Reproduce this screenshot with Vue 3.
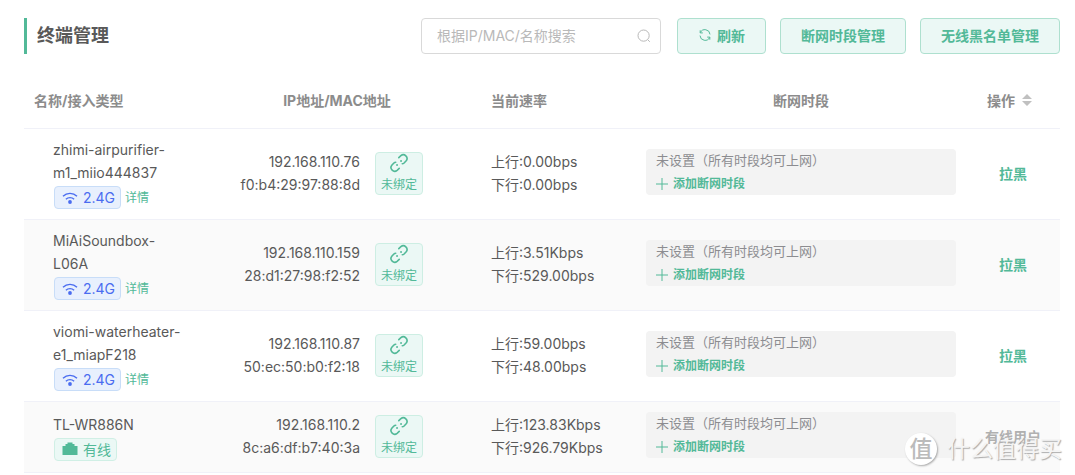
<script setup>
import { ref } from 'vue'

const keyword = ref('')
const clients = [
  { name: ['zhimi-airpurifier-', 'm1_miio444837'], wired: false, ip: '192.168.110.76', mac: 'f0:b4:29:97:88:8d', up: '0.00bps', down: '0.00bps' },
  { name: ['MiAiSoundbox-', 'L06A'], wired: false, ip: '192.168.110.159', mac: '28:d1:27:98:f2:52', up: '3.51Kbps', down: '529.00bps' },
  { name: ['viomi-waterheater-', 'e1_miapF218'], wired: false, ip: '192.168.110.87', mac: '50:ec:50:b0:f2:18', up: '59.00bps', down: '48.00bps' },
  { name: ['TL-WR886N'], wired: true, ip: '192.168.110.2', mac: '8c:a6:df:b7:40:3a', up: '123.83Kbps', down: '926.79Kbps' },
]
</script>

<template>
  <main class="page">
    <header class="bar">
      <h1>终端管理</h1>
      <div class="search">
        <input v-model="keyword" type="text" aria-label="搜索" placeholder="根据IP/MAC/名称搜索" />
        <svg viewBox="0 0 14 14" aria-hidden="true"><circle cx="6.6" cy="6.6" r="5.6" /><path d="M10.8 10.8l2 2" /></svg>
      </div>
      <div class="actions">
        <button class="btn" type="button">
          <svg viewBox="0 0 14 14" aria-hidden="true">
            <path d="M2.3 4.6A5.1 5.1 0 0 1 12 6.4M11.7 9.4A5.1 5.1 0 0 1 2 7.6M2.2 2.3v2.6h2.6M11.8 11.7V9.1H9.2" />
          </svg>
          <span>刷新</span>
        </button>
        <button class="btn" type="button">断网时段管理</button>
        <button class="btn" type="button">无线黑名单管理</button>
      </div>
    </header>

    <table>
      <colgroup>
        <col class="c-name" /><col class="c-addr" /><col class="c-rate" /><col class="c-period" /><col class="c-act" />
      </colgroup>
      <thead>
        <tr>
          <th class="left">名称/接入类型</th>
          <th>IP地址/MAC地址</th>
          <th class="left">当前速率</th>
          <th>断网时段</th>
          <th><span class="sort">操作<svg viewBox="0 0 10 12" aria-hidden="true"><path d="M5 0l5 5H0zM5 12L0 7h10z" /></svg></span></th>
        </tr>
      </thead>
      <tbody>
        <tr v-for="c in clients" :key="c.mac">
          <td class="name">
            <div v-for="line in c.name" :key="line">{{ line }}</div>
            <div class="tags">
              <span v-if="c.wired" class="tag wired">
                <svg viewBox="0 0 16 14" aria-hidden="true"><path d="M.5 4h3V2h2V.5h5V2h2v2h3v9H.5z" /></svg>有线
              </span>
              <template v-else>
                <span class="tag">
                  <svg viewBox="0 0 16 14" aria-hidden="true">
                    <path d="M1 5.2a10 10 0 0 1 14 0M3.9 8.2a6 6 0 0 1 8.2 0" /><circle cx="8" cy="11" r="1.9" />
                  </svg>2.4G
                </span>
                <a href="#">详情</a>
              </template>
            </div>
          </td>
          <td class="addr">
            <div class="pair">
              <div>{{ c.ip }}<br />{{ c.mac }}</div>
              <button class="bind" type="button">
                <svg viewBox="0 0 20 20" aria-hidden="true">
                  <path d="M9.8 4.6l2.1-1.9a3.7 3.7 0 0 1 5.3 5.1l-2.1 2.2q-.8.8-1.8.8M10.2 15.4l-2.1 1.9a3.7 3.7 0 0 1-5.3-5.1l2.1-2.2q.8-.8 1.8-.8" />
                  <path class="dots" d="M8 12h.1M12 8h.1" />
                </svg>
                <span>未绑定</span>
              </button>
            </div>
          </td>
          <td>上行:{{ c.up }}<br />下行:{{ c.down }}</td>
          <td class="when">
            <div class="period">
              <span>未设置（所有时段均可上网）</span>
              <button type="button">
                <svg viewBox="0 0 12 12" aria-hidden="true"><path d="M6 0v12M0 6h12" /></svg>添加断网时段
              </button>
            </div>
          </td>
          <td class="act">
            <span v-if="c.wired">有线用户</span>
            <button v-else type="button">拉黑</button>
          </td>
        </tr>
      </tbody>
    </table>

    <div class="mark"><span class="seal">值</span><span>什么值得买</span></div>
  </main>
</template>

<style>
body {
  margin: 0;
  background: #fff;
}
</style>

<style scoped>
.page {
  position: relative;
  padding: 18px 15px 2px 24px;
  font: 14px/23px Inter, "Noto Sans CJK SC", sans-serif;
  color: #595959;
}
button {
  font: inherit;
  color: #52b998;
  cursor: pointer;
}
svg {
  fill: none;
  stroke: currentColor;
}
.bar {
  display: flex;
  gap: 16px;
  height: 36px;
}
.actions {
  display: flex;
  gap: 14px;
}
h1 {
  flex: 1;
  margin: 0;
  padding-left: 10px;
  border-left: 3px solid #52b998;
  font-size: 18px;
  line-height: 36px;
  font-weight: 700;
}
.search {
  display: flex;
  align-items: center;
  box-sizing: border-box;
  width: 240px;
  padding: 0 9px 0 15px;
  border: 1px solid #d9d9d9;
  border-radius: 4px;
  color: #b9b9b9;
}
.search input {
  flex: 1;
  min-width: 0;
  padding: 0;
  border: 0;
  outline: 0;
  background: none;
  font: inherit;
  line-height: 20px;
  color: #595959;
}
.search input::placeholder {
  color: #b9b9b9;
}
.search svg {
  width: 14px;
  height: 14px;
}
.btn {
  display: flex;
  align-items: center;
  gap: 5px;
  padding: 0 20px 2px;
  border: 1px solid #aee0cf;
  border-radius: 4px;
  background: #ebf8f5;
  font-weight: 700;
}
.btn svg {
  width: 14px;
  height: 14px;
}
table {
  width: 100%;
  margin-top: 20px;
  table-layout: fixed;
  border-collapse: separate;
  border-spacing: 0;
}
.c-name { width: 169px; }
.c-addr { width: 288px; }
.c-rate { width: 155px; }
.c-period { width: 330px; }
.c-act { width: 94px; }
th,
td {
  padding: 9px 10px 11px;
  border-bottom: 1px solid #f0f1f8;
  vertical-align: middle;
}
th {
  height: 34px;
  color: #8c8c8c;
  font-weight: 700;
  text-align: center;
}
.left {
  text-align: left;
}
.sort {
  display: flex;
  align-items: center;
  justify-content: center;
  gap: 7px;
  padding-right: 7px;
}
.sort svg {
  width: 10px;
  height: 12px;
  fill: #c0c0c0;
  stroke: none;
}
tbody tr:nth-child(even) {
  background: #fafafa;
}
.name {
  padding-bottom: 10px;
  padding-left: 29px;
}
.tags {
  display: flex;
  align-items: center;
  gap: 4px;
  padding: 2px 0 0 1px;
}
.tag {
  display: flex;
  align-items: center;
  gap: 5px;
  height: 21px;
  padding: 0 5px 0 7px;
  border: 1px solid #c8ddf8;
  border-radius: 4px;
  background: #e8f0fd;
  color: #4a6cf0;
}
.tag svg {
  width: 16px;
  height: 14px;
  stroke-width: 1.4;
}
.tag circle {
  fill: currentColor;
  stroke: none;
}
.tag.wired {
  border-color: #d0efe5;
  background: #ebf8f5;
  color: #52b998;
}
.wired svg {
  fill: currentColor;
  stroke: none;
}
.tags a {
  color: #52b998;
  font-size: 12px;
  text-decoration: none;
}
.addr {
  padding-right: 58px;
}
.pair {
  display: flex;
  align-items: center;
  justify-content: flex-end;
  gap: 15px;
  text-align: right;
}
.bind {
  display: flex;
  flex-direction: column;
  align-items: center;
  box-sizing: border-box;
  width: 48px;
  height: 43px;
  margin-top: 1px;
  padding: 0;
  border: 1px solid #cdeee3;
  border-radius: 4px;
  background: #ebf8f5;
  font-size: 12px;
  line-height: 24px;
}
.bind svg {
  flex: none;
  width: 20px;
  height: 20px;
  stroke-width: 1.6;
  stroke-linecap: round;
}
.bind .dots {
  stroke-width: 1.8;
}
.when {
  padding: 10px;
}
.period {
  display: flex;
  flex-direction: column;
  align-items: flex-start;
  margin-bottom: 4px;
  padding-left: 10px;
  border-radius: 4px;
  background: #f3f3f3;
  color: #8c8c90;
  font-size: 13px;
}
.period button {
  display: flex;
  align-items: center;
  gap: 5px;
  padding: 0;
  border: 0;
  background: none;
  font-size: 12px;
  font-weight: 700;
}
.period svg {
  width: 12px;
  height: 12px;
}
.act {
  text-align: center;
  font-weight: 700;
  color: #b0b0b0;
}
.act button {
  padding: 0;
  border: 0;
  background: none;
}
.mark {
  position: absolute;
  right: 13px;
  bottom: 9px;
  display: flex;
  align-items: center;
  gap: 10px;
  color: #f4f4f4;
  font-size: 23px;
  line-height: 34px;
  text-shadow: 1px 1px 1px #aaa;
}
.seal {
  width: 32px;
  height: 32px;
  border-radius: 50%;
  background: #fff;
  box-shadow: 1px 1px 2px #aaa;
  color: #bbb;
  font-weight: 500;
  line-height: 32px;
  text-align: center;
  text-shadow: none;
}
</style>
